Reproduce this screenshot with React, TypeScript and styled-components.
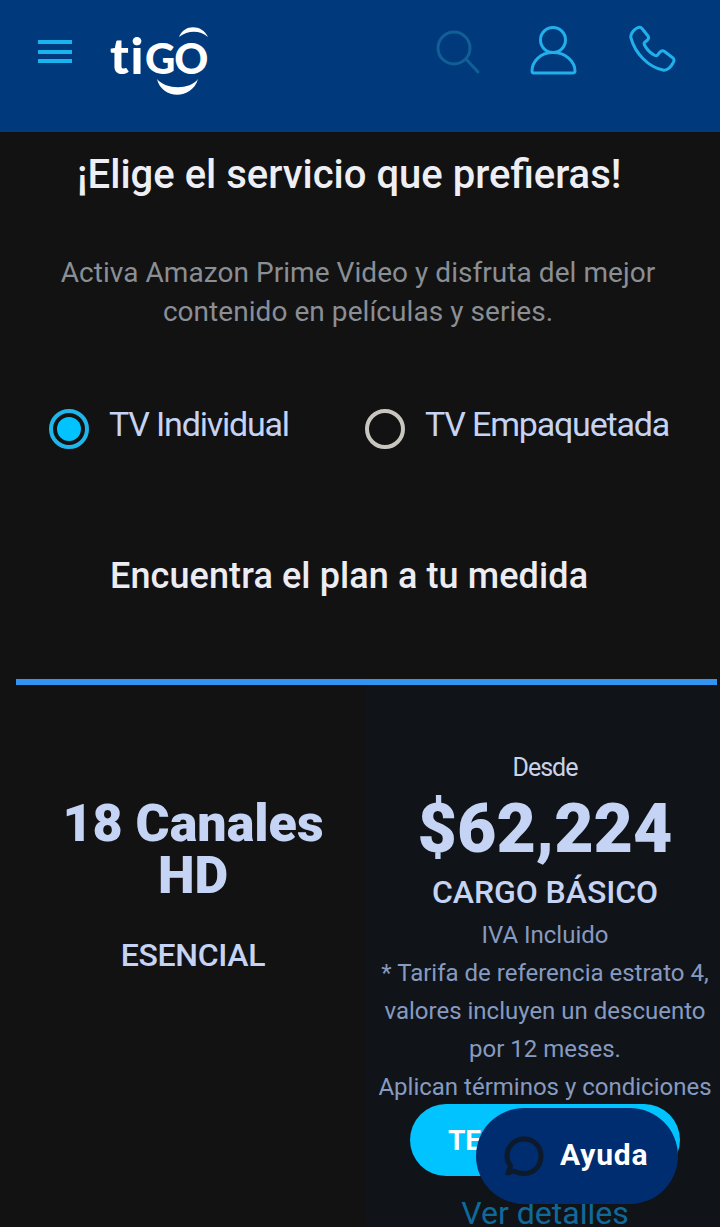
import styled, { createGlobalStyle } from 'styled-components'

const GlobalStyle = createGlobalStyle`
  html, body {
    margin: 0;
    height: 1227px;
    overflow: hidden;
    background: #121212;
    font-family: Roboto, "Liberation Sans", sans-serif;
  }
  * { box-sizing: border-box; }
`

const Header = styled.header`
  height: 132px;
  background: #003a7d;
  display: flex;
  align-items: flex-start;
  padding: 25px 44px 0 38px;
`

const MenuButton = styled.div`
  width: 34px;
  height: 23px;
  margin-top: 15px;
  display: flex;
  flex-direction: column;
  justify-content: space-between;
  span {
    height: 4px;
    background: #19b4f0;
  }
`

const Logo = styled.div`
  position: relative;
  width: 100px;
  height: 72px;
  margin-left: 38px;
`

const LogoWord = styled.span`
  position: absolute;
  left: 0;
  top: 0;
  font-family: Lato, sans-serif;
  font-weight: 900;
  font-size: 50px;
  line-height: 60px;
  letter-spacing: 1.5px;
  color: #fff;
`

const LogoCaps = styled.span`
  font-weight: 900;
  font-size: 42px;
  letter-spacing: -1px;
  text-transform: uppercase;
`

const LogoArcs = styled.svg`
  position: absolute;
  left: 0;
  top: 0;
  fill: #fff;
`

const HeaderIcons = styled.div`
  margin-left: auto;
  display: flex;
  gap: 50px;
  align-items: flex-start;
`

const Icon = styled.svg`
  display: block;
  fill: none;
  stroke: #22b0ea;
  stroke-width: 3;
  stroke-linecap: round;
  stroke-linejoin: round;
`

const SearchIcon = styled(Icon)`
  margin-top: 5px;
  stroke: #125f96;
`

const Intro = styled.section`
  height: 547px;
  display: flex;
  flex-direction: column;
`

const Title = styled.h1`
  margin: 21px 0 0 77px;
  font-size: 40px;
  line-height: 44px;
  font-weight: 500;
  white-space: nowrap;
  color: #eeeef5;
`

const Description = styled.p`
  margin: 56px 0 0;
  padding: 0 40px 0 36px;
  text-align: center;
  font-size: 28px;
  line-height: 39px;
  letter-spacing: 0.05px;
  white-space: nowrap;
  color: #8a8e95;
`

const RadioRow = styled.div`
  margin-top: 78px;
  display: flex;
  padding-left: 49px;
`

const RadioOption = styled.label<{ $width: number }>`
  display: flex;
  align-items: center;
  gap: 20px;
  width: ${(p) => p.$width}px;
`

const RadioText = styled.span`
  padding-bottom: 10px;
  font-size: 34px;
  line-height: 30px;
  letter-spacing: -1.2px;
  white-space: nowrap;
  color: #c5d3f5;
`

const RadioMark = styled.span<{ $checked?: boolean }>`
  width: 40px;
  height: 40px;
  flex: none;
  border-radius: 50%;
  border: 4px solid ${(p) => (p.$checked ? '#1fb6ea' : '#c9c6c0')};
  display: flex;
  align-items: center;
  justify-content: center;
  &::after {
    content: '';
    display: ${(p) => (p.$checked ? 'block' : 'none')};
    width: 24px;
    height: 24px;
    border-radius: 50%;
    background: #00c3ff;
  }
`

const Subtitle = styled.h2`
  margin: 0;
  padding-left: 110px;
  margin-top: 105px;
  font-size: 36px;
  line-height: 44px;
  font-weight: 500;
  letter-spacing: 0.1px;
  white-space: nowrap;
  color: #ececf2;
`

const PlanCard = styled.article`
  margin-left: 14px;
  display: grid;
  grid-template-columns: 352px 354px;
`

const BlueBar = styled.div`
  grid-column: 1 / -1;
  height: 6px;
  margin-left: 2px;
  margin-right: 3px;
  background: #3293f0;
`

const NameColumn = styled.div`
  background: #121212;
  padding: 113px 0 0 6px;
  text-align: center;
  height: 542px;
`

const PlanName = styled.h3`
  margin: 0;
  font-size: 52px;
  line-height: 52px;
  font-weight: 900;
  color: #c5d3f5;
`

const PlanTier = styled.div`
  margin-top: 35px;
  font-size: 32px;
  line-height: 36px;
  font-weight: 500;
  letter-spacing: -0.3px;
  color: #c5d3f5;
`

const PriceColumn = styled.div`
  background: #101418;
  padding: 67px 0 0 4px;
  display: flex;
  flex-direction: column;
  align-items: center;
  text-align: center;
`

const From = styled.div`
  font-size: 25px;
  line-height: 32px;
  letter-spacing: -1px;
  color: #c9d2e6;
`

const Price = styled.div`
  margin-top: 7px;
  font-size: 68px;
  line-height: 76px;
  font-weight: 900;
  color: #c5d3f5;
`

const Charge = styled.div`
  margin-top: 5px;
  font-size: 32px;
  line-height: 40px;
  font-weight: 500;
  letter-spacing: -0.07px;
  color: #c5d3f5;
`

const Legal = styled.div`
  margin-top: 4px;
  font-size: 24px;
  line-height: 38px;
  white-space: nowrap;
  color: #879ac0;
`

const CallButton = styled.button`
  margin-top: -2px;
  width: 270px;
  height: 72px;
  flex: none;
  border: 0;
  border-radius: 36px;
  background: #00c3ff;
  color: #fff;
  font: 700 28px Roboto, sans-serif;
  text-align: center;
`

const Details = styled.a`
  margin-top: 19px;
  font-size: 32px;
  line-height: 36px;
  color: #0f6a9c;
`

const HelpBubble = styled.div`
  position: fixed;
  left: 476px;
  top: 1108px;
  width: 202px;
  height: 96px;
  border-radius: 48px;
  background: #002d6f;
  display: flex;
  align-items: center;
  gap: 16px;
  padding-left: 28px;
`

const HelpLabel = styled.span`
  margin-bottom: 3px;
  font-size: 30px;
  font-weight: 700;
  letter-spacing: 0.8px;
  color: #fff;
`

export default function App() {
  return (
    <>
      <GlobalStyle />
      <Header>
        <MenuButton>
          <span />
          <span />
          <span />
        </MenuButton>
        <Logo>
          <LogoWord>
            ti<LogoCaps>go</LogoCaps>
          </LogoWord>
          <LogoArcs width="100" height="72" viewBox="0 0 100 72">
            <path d="M69 12 C74 -1 92 -1 98 12 C90 5 78 5 69 12 Z" />
            <path d="M47 54 C52 75 82 75 88 54 C80 65 56 65 47 54 Z" />
          </LogoArcs>
        </Logo>
        <HeaderIcons>
          <SearchIcon width="44" height="44" viewBox="0 0 44 44">
            <circle cx="18" cy="18" r="16" />
            <path d="M30 29 L42 42" />
          </SearchIcon>
          <Icon width="48" height="50" viewBox="0 0 48 50">
            <circle cx="23" cy="15" r="12.5" />
            <path d="M23 27.500 C10 27.500 2 37 2 46 C2 47.500 3 48 4 48 L42 48 C44 48 45 47 45 46 C45 37 36 27.500 23 27.500 Z" />
          </Icon>
          <Icon width="48" height="48" viewBox="0 0 48 48">
            <path d="M3 13 C2 10 5 5 9 3 C11 2 13 2 14 3.500 L20 11 C21 12.500 20.500 14 19.500 15 L16.500 17.500 C16 18 16 19 16.500 20 C19 25 23 28.500 27 30.500 C28 31 29 31 29.500 30 L32 27 C33 26 35 25.500 36.500 26.500 L45 33 C46.500 34.500 46 36.500 45 38 C43 42 39 46 35 45 C20 42 7 28 3 13 Z" />
          </Icon>
        </HeaderIcons>
      </Header>
      <Intro>
        <Title>¡Elige el servicio que prefieras!</Title>
        <Description>
          Activa Amazon Prime Video y disfruta del mejor
          <br />
          contenido en películas y series.
        </Description>
        <RadioRow>
          <RadioOption $width={316}>
            <RadioMark $checked />
            <RadioText>TV Individual</RadioText>
          </RadioOption>
          <RadioOption $width={320}>
            <RadioMark />
            <RadioText>TV Empaquetada</RadioText>
          </RadioOption>
        </RadioRow>
        <Subtitle>Encuentra el plan a tu medida</Subtitle>
      </Intro>
      <PlanCard>
        <BlueBar />
        <NameColumn>
          <PlanName>
            18 Canales
            <br />
            HD
          </PlanName>
          <PlanTier>ESENCIAL</PlanTier>
        </NameColumn>
        <PriceColumn>
          <From>Desde</From>
          <Price>$62,224</Price>
          <Charge>CARGO BÁSICO</Charge>
          <Legal>
            IVA Incluido
            <br />* Tarifa de referencia estrato 4,
            <br />
            valores incluyen un descuento
            <br />
            por 12 meses.
            <br />
            Aplican términos y condiciones
          </Legal>
          <CallButton>TE LLAMAMOS</CallButton>
          <Details>Ver detalles</Details>
        </PriceColumn>
      </PlanCard>
      <HelpBubble>
        <svg width="40" height="40" viewBox="0 0 40 40" fill="none" stroke="#0d1a2c" strokeWidth="5" strokeLinecap="round" strokeLinejoin="round">
          <path d="M4 37 L10 35 C13 37 16 37.500 20 37.500 C30 37.500 37 30 37 20 C37 10.500 30 3 20 3 C10.500 3 3 10.500 3 20 C3 24 4.500 27 6.500 30 Z" />
        </svg>
        <HelpLabel>Ayuda</HelpLabel>
      </HelpBubble>
    </>
  )
}
